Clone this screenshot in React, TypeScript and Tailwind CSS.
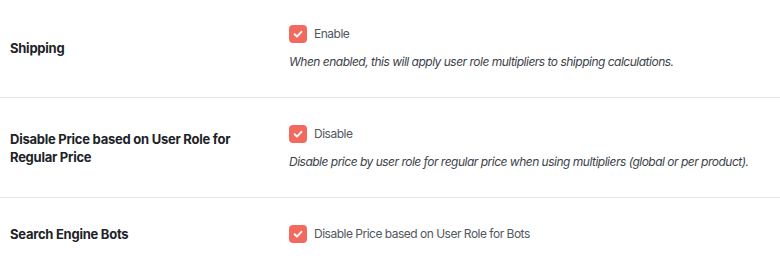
import React from 'react';

type Setting = {
  title: string;
  label: string;
  description?: string;
};

const settings: Setting[] = [
  {
    title: 'Shipping',
    label: 'Enable',
    description: 'When enabled, this will apply user role multipliers to shipping calculations.',
  },
  {
    title: 'Disable Price based on User Role for Regular Price',
    label: 'Disable',
    description:
      'Disable price by user role for regular price when using multipliers (global or per product).',
  },
  {
    title: 'Search Engine Bots',
    label: 'Disable Price based on User Role for Bots',
  },
];

function CheckBox() {
  return (
    <span className="flex h-[18px] w-[18px] shrink-0 items-center justify-center rounded-[4px] bg-[#f2695d]">
      <svg width="12" height="12" viewBox="0 0 12 12" fill="none">
        <path
          d="M2.6 6.2 L5 8.5 L9.4 3.8"
          stroke="#fff"
          strokeWidth="1.9"
          strokeLinecap="round"
          strokeLinejoin="round"
        />
      </svg>
    </span>
  );
}

export default function App() {
  return (
    <div className="w-[780px] bg-white font-['Inter',sans-serif]">
      {settings.map((s, i) => (
        <div
          key={s.title}
          className={`grid grid-cols-[289px_1fr] border-b border-[#e6e6e6] ${
            i === 0 ? 'pt-[25px] pb-[26px]' : 'pt-[27px]'
          } ${i === 1 ? 'pb-[26px]' : ''} ${i === 2 ? 'pb-[37px]' : ''}`}
        >
          <div className="flex items-center pl-[10px] pr-[40px] text-[13px] font-bold leading-[18px] tracking-[-0.25px] text-[#1d2327]">
            {s.title}
          </div>
          <div>
            <label className="flex items-center gap-[7px]">
              <CheckBox />
              <span className="text-[12px] leading-[18px] tracking-[-0.5px] text-[#50575e]">
                {s.label}
              </span>
            </label>
            {s.description && (
              <p className="mt-[10px] text-[12px] italic leading-[18px] tracking-[-0.5px] text-[#3c434a]">
                {s.description}
              </p>
            )}
          </div>
        </div>
      ))}
    </div>
  );
}
